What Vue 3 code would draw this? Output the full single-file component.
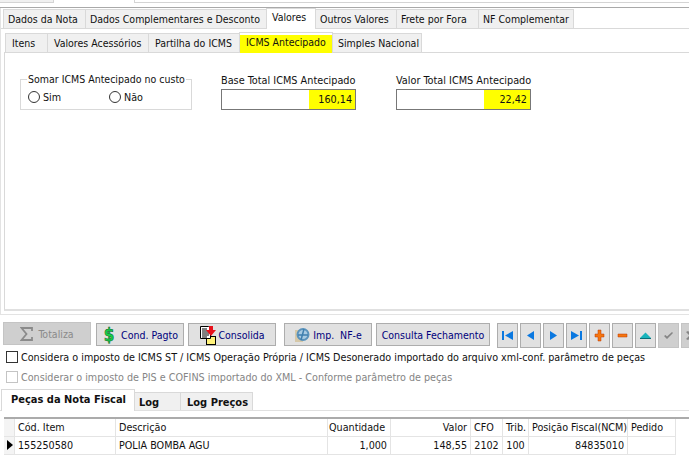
<template>
  <div class="screen">
    <div class="top-strip">
      <div class="strip-part a"></div>
      <div class="strip-part b"></div>
    </div>

    <div class="frame">
      <div class="tabs outer">
        <div v-for="t in outerTabs" :key="t.label" class="tab" :class="{ active: t.label === 'Valores' }" :style="{ width: t.w + 'px' }">{{ t.label }}</div>
      </div>
      <div class="inner-wrap">
        <div class="tabs inner">
          <div v-for="t in innerTabs" :key="t.label" class="tab" :class="{ active: t.label === 'ICMS Antecipado', hl: t.label === 'ICMS Antecipado' }" :style="{ width: t.w + 'px' }">{{ t.label }}</div>
        </div>

        <div class="panel">
          <fieldset class="group">
            <legend>Somar ICMS Antecipado no custo</legend>
            <label class="radio"><span class="circle"></span>Sim</label>
            <label class="radio"><span class="circle"></span>Não</label>
          </fieldset>
          <div class="field first">
            <div class="field-label">Base Total ICMS Antecipado</div>
            <div class="input"><span>160,14</span></div>
          </div>
          <div class="field">
            <div class="field-label">Valor Total ICMS Antecipado</div>
            <div class="input"><span>22,42</span></div>
          </div>
        </div>
      </div>
    </div>

    <div class="toolbar">
      <button class="btn disabled totaliza">
        <svg width="13" height="14" viewBox="0 0 13 14"><path d="M12 4V1H1.500L6.500 7l-5 6H12v-3" fill="none" stroke="#8a8a8a" stroke-width="1.800"/></svg>
        Totaliza
      </button>
      <button class="btn cond">
        <svg width="14" height="18" viewBox="0 0 14 18"><text x="7" y="15" text-anchor="middle" class="dollar">$</text></svg>
        Cond. Pagto
      </button>
      <button class="btn cons">
        <svg width="18" height="20" viewBox="0 0 18 20">
          <rect x="7.500" y="11.500" width="9" height="8" fill="#fff27a" stroke="#000"/>
          <path d="M1.500 1.500h8l2 2v10h-10z" fill="#fff" stroke="#000"/>
          <path d="M3 4h5M3 6h7M3 8h7M3 10h7M3 12h5" stroke="#000"/>
          <path d="M10 1h4v4h3l-5 6-5-6h3z" fill="#e8101a"/>
        </svg>
        Consolida
      </button>
      <button class="btn nfe">
        <svg width="16" height="16" viewBox="0 0 16 16">
          <rect x="1" y="3" width="8" height="12" fill="#d6c8a8"/>
          <circle cx="9" cy="7.500" r="5.500" fill="#a9cbe2" stroke="#5b93bb" stroke-width="2"/>
          <path d="M4 8h10M10 2L7 13" stroke="#3f7fae" stroke-width="1.500"/>
        </svg>
        Imp. &nbsp;NF-e
      </button>
      <button class="btn fech">Consulta Fechamento</button>
      <div class="nav">
        <button v-for="n in navButtons" :key="n.id" class="nav-btn" :class="{ off: n.off }">
          <svg width="15" height="15" viewBox="0 0 15 15" v-html="n.svg"></svg>
        </button>
      </div>
    </div>

    <div class="check-row"><span class="box"></span>Considera o imposto de ICMS ST / ICMS Operação Própria / ICMS Desonerado importado do arquivo xml-conf. parâmetro de peças</div>
    <div class="check-row dim"><span class="box"></span>Considerar o imposto de PIS e COFINS importado do XML - Conforme parâmetro de peças</div>

    <div class="tabs bottom">
      <div v-for="t in bottomTabs" :key="t.label" class="tab" :class="{ active: t.label === 'Peças da Nota Fiscal' }" :style="{ width: t.w + 'px' }">{{ t.label }}</div>
    </div>

    <div class="grid">
      <div class="row head">
        <div class="cell ind"></div>
        <div v-for="c in columns" :key="c.label" class="cell" :class="{ right: c.headRight }" :style="{ width: c.w + 'px' }">{{ c.label }}</div>
      </div>
      <div class="row body">
        <div class="cell ind"><span class="arrow"></span></div>
        <div v-for="c in columns" :key="c.label" class="cell" :class="c.align" :style="{ width: c.w + 'px' }">{{ c.value }}</div>
      </div>
    </div>
  </div>
</template>

<script setup>
const outerTabs = [
  { label: 'Dados da Nota', w: 83 },
  { label: 'Dados Complementares e Desconto', w: 182 },
  { label: 'Valores', w: 50 },
  { label: 'Outros Valores', w: 82 },
  { label: 'Frete por Fora', w: 83 },
  { label: 'NF Complementar', w: 96 }
]
const innerTabs = [
  { label: 'Itens', w: 43 },
  { label: 'Valores Acessórios', w: 102 },
  { label: 'Partilha do ICMS', w: 92 },
  { label: 'ICMS Antecipado', w: 94 },
  { label: 'Simples Nacional', w: 90 }
]
const bottomTabs = [
  { label: 'Peças da Nota Fiscal', w: 134 },
  { label: 'Log', w: 47 },
  { label: 'Log Preços', w: 73 }
]

const columns = [
  { label: 'Cód. Item', value: '155250580', w: 101 },
  { label: 'Descrição', value: 'POLIA BOMBA AGU', w: 212 },
  { label: 'Quantidade', value: '1,000', w: 63, align: 'right' },
  { label: 'Valor', value: '148,55', w: 80, align: 'right', headRight: true },
  { label: 'CFO', value: '2102', w: 32, align: 'center' },
  { label: 'Trib.', value: '100', w: 26, align: 'center' },
  { label: 'Posição Fiscal(NCM)', value: '84835010', w: 99, align: 'right' },
  { label: 'Pedido', value: '', w: 48 }
]

const navButtons = [
  { id: 'first', svg: '<path d="M2 3h2v9H2z" fill="#0a78e0"/><path d="M13 3v9L5 7.500z" fill="#0a78e0"/>' },
  { id: 'prev', svg: '<path d="M11 3v9L4 7.500z" fill="#0a78e0"/>' },
  { id: 'next', svg: '<path d="M4 3v9l7-4.500z" fill="#0a78e0"/>' },
  { id: 'last', svg: '<path d="M11 3h2v9h-2z" fill="#0a78e0"/><path d="M2 3v9l8-4.500z" fill="#0a78e0"/>' },
  { id: 'add', svg: '<path d="M6 2h3v4h3v3H9v4H6V9H3V6h3z" fill="#f5760f" stroke="#b83a08" stroke-width=".5"/>' },
  { id: 'del', svg: '<path d="M3 6h9v3H3z" fill="#f5760f" stroke="#b83a08" stroke-width=".5"/>' },
  { id: 'up', svg: '<path d="M7.500 4.500L13 10H2z" fill="#1ab4bc"/><path d="M2 10h11v1H2z" fill="#0b6f78"/>' },
  { id: 'ok', off: true, svg: '<path d="M3 8l1.500-1 1.500 1.500L11 4l1 1-6 6z" fill="#858585"/>' },
  { id: 'x', off: true, svg: '<path d="M2 4l2-1 3.500 3L11 3l2 1-3.500 3.500L13 11l-2 1-3.500-3L4 12l-2-1 3.500-3.500z" fill="#858585"/>' }
]
</script>

<style>
html, body {
  margin: 0;
  background: #fff;
  overflow: hidden;
}
</style>

<style scoped>
.screen {
  width: 689px;
  height: 463px;
  overflow: hidden;
  background: #fff;
  font-family: "DejaVu Sans Condensed", "DejaVu Sans", sans-serif;
  font-stretch: condensed;
  font-size: 10.700px;
  color: #111;
}

.top-strip {
  display: flex;
  height: 8px;
  box-sizing: border-box;
  border-bottom: 1px solid #a9a9a9;
}

.strip-part {
  height: 2px;
  border-bottom: 1px solid #d4d4d4;
}

.strip-part.a {
  width: 53px;
  background: #f0f0f0;
  border-right: 1px solid #d4d4d4;
}

.strip-part.b {
  flex: 1;
  margin-left: 80px;
  border-left: 1px solid #d4d4d4;
}

.frame {
  height: 307px;
  box-sizing: border-box;
  border-left: 1px solid #e3e3e3;
  border-bottom: 1px solid #e3e3e3;
}

.tabs {
  display: flex;
  align-items: flex-end;
  box-sizing: border-box;
  border-bottom: 1px solid #d9d9d9;
}

.outer {
  height: 21px;
  padding-left: 2px;
}

.inner-wrap {
  margin-left: 3px;
}

.inner {
  height: 24px;
  padding-left: 1px;
}

.tab {
  height: 19px;
  line-height: 19px;
  padding-left: 4px;
  font-size: 10.500px;
  background: #f0f0f0;
  border: 1px solid #d9d9d9;
  border-bottom: 0;
  margin-right: -1px;
  box-sizing: border-box;
  white-space: nowrap;
  flex: none;
}

.outer .tab {
  padding-left: 4px;
}

.inner .tab {
  padding-left: 6px;
  line-height: 18px;
}

.inner .tab:last-child {
  padding-left: 5px;
}

.outer .tab.active {
  padding-left: 5px;
}

.tab.active {
  position: relative;
  height: 21px;
  line-height: 17px;
  margin-bottom: -1px;
  background: #fff;
}

.inner .tab.hl {
  background: linear-gradient(#fff 0 2px, #ffff00 2px);
  line-height: 19px;
}

.panel {
  display: flex;
  align-items: flex-start;
  height: 258px;
  border-left: 1px solid #d9d9d9;
  border-bottom: 2px solid #e0e0e0;
  box-sizing: border-box;
  padding: 19px 0 0 15px;
}

.group {
  width: 172px;
  min-width: 0;
  height: 38px;
  margin: 0;
  padding: 0 0 0 7px;
  border: 1px solid #d9d9d9;
  box-sizing: border-box;
  display: flex;
  flex: none;
}

.group legend {
  padding: 0 1px;
  margin-left: -1px;
  font-size: 10.500px;
  line-height: 14px;
  white-space: nowrap;
}

.radio {
  display: flex;
  align-items: center;
  width: 81px;
  height: 12px;
  gap: 3px;
  margin-top: 5px;
}

.circle {
  width: 12px;
  height: 12px;
  box-sizing: border-box;
  border: 1px solid #333;
  border-radius: 50%;
}

.field {
  width: 135px;
  margin-left: 40px;
  margin-top: 2px;
  flex: none;
}

.field.first {
  margin-left: 29px;
}

.field-label {
  height: 15px;
  line-height: 14px;
  font-size: 10.800px;
  white-space: nowrap;
}

.input {
  height: 21px;
  border: 1px solid #777;
  box-sizing: border-box;
  text-align: right;
}

.input span {
  display: inline-block;
  width: 46px;
  height: 19px;
  line-height: 19px;
  padding-right: 3px;
  box-sizing: border-box;
  background: #ffff00;
}

.toolbar {
  display: flex;
  align-items: flex-start;
  margin-top: 7px;
  padding-left: 3px;
  height: 25px;
}

.btn {
  display: flex;
  flex: none;
  align-items: center;
  justify-content: center;
  gap: 5px;
  box-sizing: border-box;
  width: 88px;
  height: 23px;
  padding: 0;
  margin: 1px 5px 0 0;
  border: 1px solid #adadad;
  background: #e1e1e1;
  font: inherit;
  font-size: 10.500px;
  color: #00007c;
  white-space: nowrap;
}

.btn.disabled {
  margin-top: 0;
  background: #cfcfcf;
  color: #8a8a8a;
  border-color: #c4c4c4;
}

.cond { gap: 5px; margin-right: 4px; }
.cons { gap: 1px; margin-right: 8px; }
.nfe { gap: 3px; margin-right: 4px; }
.fech { width: 114px; margin-right: 7px; }

.nav {
  display: flex;
  flex: none;
  gap: 2px;
  margin-top: 1px;
}

.nav-btn {
  flex: none;
  box-sizing: border-box;
  width: 21px;
  height: 25px;
  padding: 0;
  display: flex;
  align-items: center;
  justify-content: center;
  border: 1px solid #adadad;
  background: #e1e1e1;
}

.nav-btn.off {
  background: #cfcfcf;
  border-color: #c4c4c4;
}

.check-row {
  display: flex;
  align-items: center;
  gap: 3px;
  height: 20px;
  padding-left: 6px;
  white-space: nowrap;
}

.check-row.dim {
  color: #858585;
}

.box {
  width: 12px;
  height: 12px;
  box-sizing: border-box;
  border: 1px solid #333;
  flex: none;
}

.dim .box {
  border-color: #c4c4c4;
}

.bottom {
  margin-top: 3px;
  height: 21px;
  padding-left: 1px;
  font-weight: bold;
  border-bottom-color: #e0e0e0;
}

.bottom .tab {
  height: 18px;
  line-height: 19px;
  font-size: 11px;
}

.bottom .tab:nth-child(2) {
  padding-left: 4px;
}

.bottom .tab:nth-child(3) {
  padding-left: 6px;
}

.bottom .tab.active {
  height: 22px;
  line-height: 19px;
  padding-left: 9px;
}

.grid {
  margin: 6px 0 0 4px;
  border-top: 2px solid #ababab;
}

.row {
  display: flex;
  height: 18px;
  line-height: 18px;
}

.cell {
  flex: none;
  box-sizing: border-box;
  padding: 0 3px;
  border-right: 1px solid #e4e4e4;
  border-bottom: 1px solid #e4e4e4;
  white-space: nowrap;
  overflow: hidden;
}

.head .cell:nth-child(4) {
  padding-left: 1px;
}

.cell.ind {
  position: relative;
  width: 11px;
  background: #f4f4f4;
}

.right { text-align: right; }
.center { text-align: center; }

.arrow {
  position: absolute;
  left: 3px;
  top: 3px;
  border-left: 6px solid #000;
  border-top: 5px solid transparent;
  border-bottom: 5px solid transparent;
}

.dollar {
  font-family: "DejaVu Sans", sans-serif;
  font-size: 17px;
  font-weight: bold;
  fill: #18d048;
  stroke: #00601c;
  stroke-width: .5px;
}
</style>
